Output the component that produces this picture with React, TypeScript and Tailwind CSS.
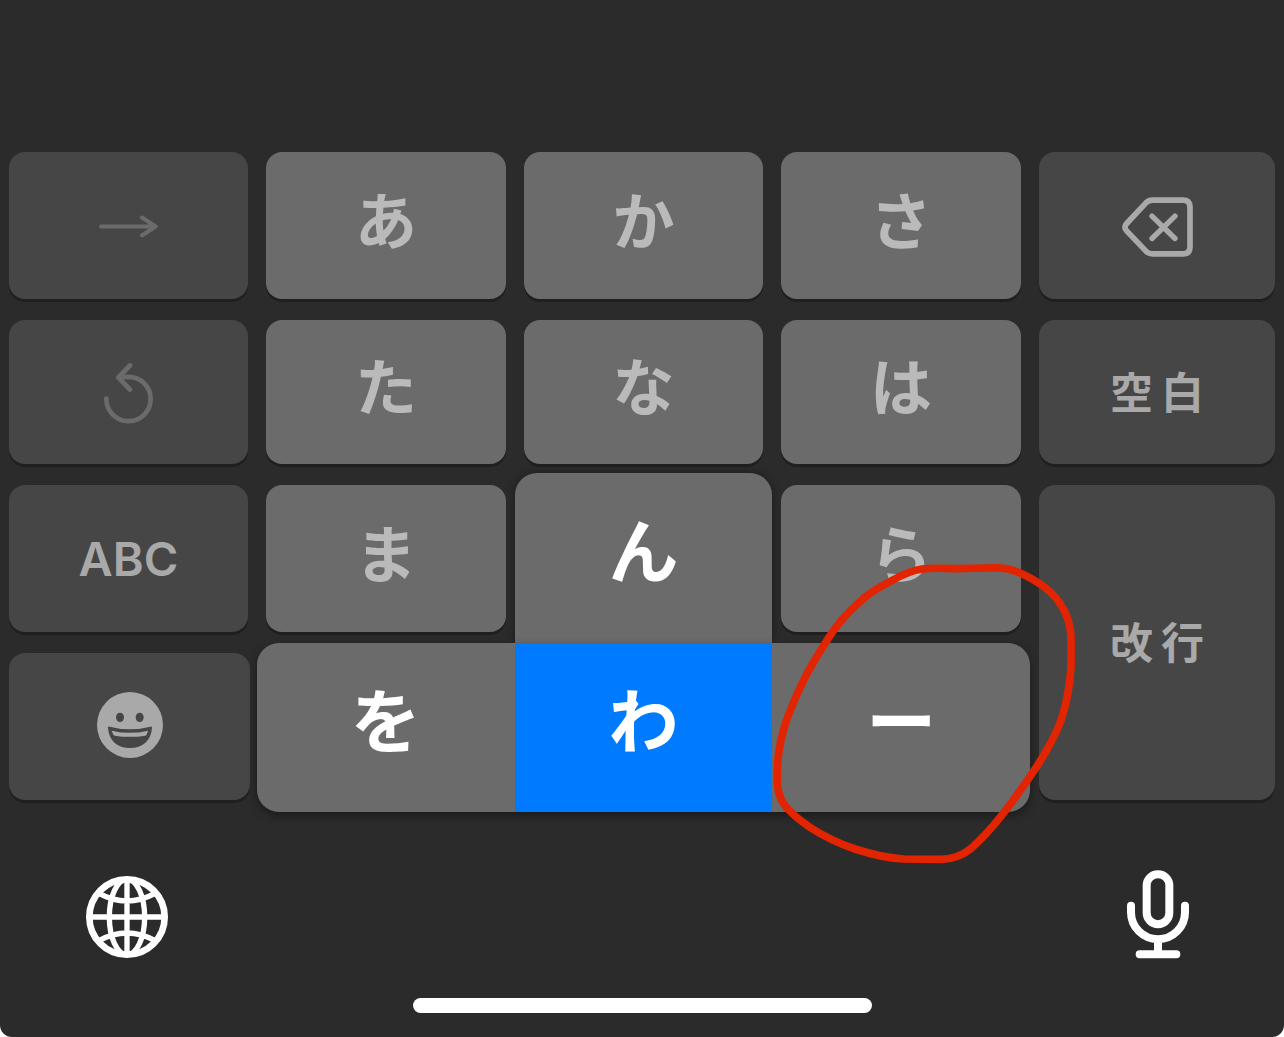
import type { ReactNode } from "react";

const shadow = "shadow-[0_3px_0_#1f1f1f]";
const jp = "font-['Noto_Sans_CJK_JP',sans-serif]";

function KanaKey({ label }: { label: string }) {
  return (
    <button
      type="button"
      className={`flex items-center justify-center rounded-[16px] bg-[#6b6b6b] pb-4 text-[62px] leading-none font-bold text-[#bababa] ${jp} ${shadow}`}
    >
      {label}
    </button>
  );
}

function ControlKey({ label, className = "", children }: { label: string; className?: string; children: ReactNode }) {
  return (
    <button
      type="button"
      aria-label={label}
      className={`flex items-center justify-center rounded-[16px] bg-[#464646] text-[#a9a9a9] ${shadow} ${className}`}
    >
      {children}
    </button>
  );
}

function SpacedWord({ text }: { text: string }) {
  return (
    <span className={`flex gap-2 pb-1 text-[43px] leading-none font-bold ${jp}`}>
      {[...text].map((char) => (
        <span key={char}>{char}</span>
      ))}
    </span>
  );
}

function ArrowIcon() {
  return (
    <svg className="h-[23px] w-[59px] text-[#6b6b6b]" viewBox="0 0 177 68" fill="none" stroke="currentColor" strokeWidth="12" strokeLinecap="round" strokeLinejoin="round">
      <path d="M6 34H170M129 7L170 34L129 61" />
    </svg>
  );
}

function UndoIcon() {
  return (
    <svg className="h-[61px] w-[49px] text-[#6b6b6b]" viewBox="0 0 147 182" fill="none" stroke="currentColor" strokeWidth="14" strokeLinecap="round" strokeLinejoin="round">
      <path d="M7 106A66.500 66.500 0 1 0 73.500 41Q58 41 43 43M78 7L43 43L78 79" />
    </svg>
  );
}

function DeleteIcon() {
  return (
    <svg className="h-[60px] w-[71px]" viewBox="0 0 213 179" fill="none" stroke="currentColor" strokeLinecap="round" strokeLinejoin="round">
      <path strokeWidth="17" d="M92 9H183Q204 9 204 30V149Q204 170 183 170H92Q80 170 72 162L14 101Q4 90 14 79L72 17Q80 9 92 9Z" />
      <path strokeWidth="16" d="M90 57L159 124M159 57L90 124" />
    </svg>
  );
}

function SmileIcon() {
  return (
    <svg className="size-[66px]" viewBox="0 0 198 198">
      <circle cx="99" cy="99" r="99" fill="currentColor" />
      <g fill="#464646">
        <ellipse cx="69" cy="76" rx="12" ry="14" />
        <ellipse cx="128" cy="76" rx="12" ry="14" />
        <path d="M33 107Q33 103 38 104Q99 120 160 104Q165 103 165 107C163 145 137 168 99 168C61 168 35 145 33 107Z" />
      </g>
      <path fill="currentColor" d="M44 116Q99 129 153 116L149 128Q148 130 145 131Q99 138 53 131Q50 130 49 128Z" />
    </svg>
  );
}

function GlobeIcon() {
  return (
    <svg className="size-[82px]" viewBox="0 0 246 246" fill="none" stroke="currentColor" strokeWidth="16">
      <circle cx="123" cy="123" r="113" strokeWidth="20" />
      <ellipse cx="123" cy="123" rx="53" ry="113" />
      <path d="M123 10V236M10 123H236M39 52Q123 98 207 52M39 194Q123 148 207 194" />
    </svg>
  );
}

function MicIcon() {
  return (
    <svg className="h-[89px] w-[62px]" viewBox="0 0 186 266" fill="none" stroke="currentColor" strokeWidth="24" strokeLinecap="round">
      <rect x="59" y="12" width="68" height="150" rx="34" />
      <path d="M12 107V126A81 81 0 0 0 174 126V107M93 207V252M38 252H148" />
    </svg>
  );
}

function HandDrawnRing() {
  return (
    <svg className="pointer-events-none absolute -top-[93px] -left-3 size-[330px]" viewBox="0 0 990 990" fill="none" stroke="#e32400" strokeWidth="23" strokeLinejoin="round">
      <path d="M585 56C540 54 510 54 485 57C450 62 420 78 395 92C360 110 320 135 300 155C260 190 230 225 205 265C175 312 150 350 130 393C105 445 85 490 72 535C60 575 53 625 52 660C51 700 52 720 62 745C75 775 110 805 150 832C190 858 235 880 285 897C335 913 390 925 430 927L545 928C580 927 605 918 630 898C665 868 700 828 730 790C765 745 800 695 830 650C865 595 895 540 908 495C922 450 930 400 933 350L933 260C932 220 920 190 900 160C880 130 855 110 830 95C805 80 770 62 740 56C720 52 700 54 680 54Z" />
    </svg>
  );
}

const flick = `flex items-center justify-center pb-5 text-[70px] leading-none font-bold text-white ${jp}`;

export default function App() {
  return (
    <main className="flex min-h-screen flex-col rounded-b-xl bg-[#2b2b2b] pt-[152px] pb-6">
      <div className="grid grid-cols-[239fr_240fr_239fr_240fr_236fr] grid-rows-[147px_144px_147px_147px] gap-x-[18px] gap-y-[21px] px-[9px]">
        <ControlKey label="次へ" className="pt-0.5"><ArrowIcon /></ControlKey>
        <KanaKey label="あ" />
        <KanaKey label="か" />
        <KanaKey label="さ" />
        <ControlKey label="削除" className="pt-0.5"><DeleteIcon /></ControlKey>

        <ControlKey label="戻す" className="pt-0.5"><UndoIcon /></ControlKey>
        <KanaKey label="た" />
        <KanaKey label="な" />
        <KanaKey label="は" />
        <ControlKey label="空白"><SpacedWord text="空白" /></ControlKey>

        <ControlKey label="ABC">
          <span className="font-['Inter',sans-serif] text-[47px] leading-none font-semibold">ABC</span>
        </ControlKey>
        <KanaKey label="ま" />
        <button type="button" className={`z-10 -mx-[9px] -mt-3 -mb-[11px] rounded-t-[22px] bg-[#6b6b6b] shadow-[0_0_8px_#00000059] ${flick}`}>
          ん
        </button>
        <KanaKey label="ら" />
        <ControlKey label="改行" className="row-span-2"><SpacedWord text="改行" /></ControlKey>

        <ControlKey label="絵文字" className="-mr-[2px] pb-1"><SmileIcon /></ControlKey>
        <div className="z-20 col-span-3 -mx-[9px] -mt-[10px] -mb-3 grid grid-cols-3 rounded-[22px] shadow-[0_4px_10px_#00000066]">
          <button type="button" className={`rounded-l-[22px] bg-[#6b6b6b] ${flick}`}>を</button>
          <button type="button" className={`bg-[#007bff] ${flick}`}>わ</button>
          <button type="button" className={`relative rounded-r-[22px] bg-[#6b6b6b] ${flick}`}>
            ー
            <HandDrawnRing />
          </button>
        </div>
      </div>

      <div className="mt-[70px] flex items-center justify-between pr-[95px] pl-[86px] text-white">
        <button type="button" aria-label="キーボード切替" className="pt-1"><GlobeIcon /></button>
        <button type="button" aria-label="音声入力"><MicIcon /></button>
      </div>
      <div className="mx-auto mt-auto h-[15px] w-[459px] max-w-full rounded-full bg-white" />
    </main>
  );
}
